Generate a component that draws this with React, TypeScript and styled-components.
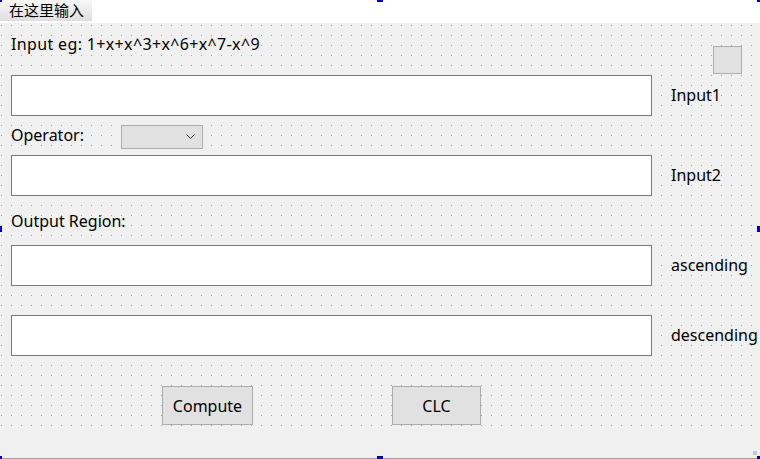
import React from 'react';
import styled, { createGlobalStyle } from 'styled-components';

const GlobalStyle = createGlobalStyle`
   html, body {
      margin: 0;
      padding: 0;
      background: #ffffff;
   }
   body {
      font-family: 'Noto Sans', 'Noto Sans CJK SC', sans-serif;
      font-size: 16px;
      color: #000000;
   }
`;

const Form = styled.div`
   position: relative;
   width: 760px;
   height: 459px;
   overflow: hidden;
   display: flex;
   flex-direction: column;
   background: #f0f0f0;
`;

const MenuBar = styled.div`
   height: 23px;
   background: #ffffff;
   display: flex;
   align-items: flex-start;
`;

const MenuItem = styled.div`
   height: 21px;
   width: 92px;
   padding-left: 9px;
   box-sizing: border-box;
   background: linear-gradient(#f8f8f8, #dedede);
   font-family: 'Noto Sans CJK SC', sans-serif;
   font-size: 15px;
   line-height: 20px;
   color: #000;
`;

const Canvas = styled.div`
   height: 410px;
   display: flex;
   flex-direction: column;
   background-color: #f0f0f0;
   background-image: conic-gradient(at 1px 1px, transparent 75%, #a0a0a0 0);
   background-size: 10px 10px;
   background-position: 1px 2px;
`;

const StatusBar = styled.div`
   flex: 1;
   position: relative;
   border-bottom: 1px solid #a0a0a0;
`;

const Grip = styled.div`
   position: absolute;
   right: 3px;
   bottom: 3px;
   width: 4px;
   height: 4px;
   background: #c8c8c8;
`;

const HintRow = styled.div`
   height: 52px;
   display: flex;
   align-items: flex-start;
   padding-left: 11px;
`;

const Text = styled.span`
   line-height: 20px;
   white-space: nowrap;
`;

const Hint = styled(Text)`
   margin-top: 11px;
   letter-spacing: 0.35px;
`;

const SideLabel = styled(Text)`
   margin-top: -1px;
`;

const SquareButton = styled.div`
   margin-top: 23px;
   margin-left: auto;
   margin-right: 18px;
   width: 29px;
   height: 28px;
   box-sizing: border-box;
   background: #e1e1e1;
   border: 1px solid #adadad;
`;

const FieldRow = styled.div<{ $top: number }>`
   display: flex;
   align-items: center;
   margin-top: ${({ $top }) => $top}px;
   padding-left: 11px;
   gap: 19px;
`;

const Field = styled.div`
   width: 641px;
   height: 41px;
   flex-shrink: 0;
   box-sizing: border-box;
   background: #ffffff;
   border: 1px solid #7a7a7a;
`;

const LabelRow = styled.div<{ $top: number }>`
   display: flex;
   align-items: center;
   margin-top: ${({ $top }) => $top}px;
   padding-left: 11px;
`;

const OperatorLabel = styled(Text)`
   width: 110px;
   margin-top: -4px;
`;

const Combo = styled.div`
   width: 82px;
   height: 24px;
   box-sizing: border-box;
   background: #e1e1e1;
   border: 1px solid #adadad;
   display: flex;
   align-items: center;
   justify-content: flex-end;
   padding-right: 7px;
`;

const ButtonRow = styled.div`
   display: flex;
   margin-top: 30px;
   padding-left: 162px;
   gap: 139px;
`;

const PushButton = styled.div<{ $w: number }>`
   width: ${({ $w }) => $w}px;
   height: 39px;
   box-sizing: border-box;
   background: #e1e1e1;
   border: 1px solid #adadad;
   display: flex;
   align-items: center;
   justify-content: center;
`;

const Handle = styled.div<{ $x: number; $y: number }>`
   position: absolute;
   left: ${({ $x }) => $x}px;
   top: ${({ $y }) => $y}px;
   width: 6px;
   height: 6px;
   box-sizing: border-box;
   background: #0000ff;
   border: 1px solid #000080;
`;

const handles: [number, number][] = [
   [-4, -4], [377, -4], [757, -4],
   [-4, 226], [757, 226],
   [-4, 456], [377, 456], [757, 456],
];

const App: React.FC = () => {
   return (
      <>
         <GlobalStyle />
         <Form>
            <MenuBar>
               <MenuItem>在这里输入</MenuItem>
            </MenuBar>
            <Canvas>
               <HintRow>
                  <Hint>Input eg: 1+x+x^3+x^6+x^7-x^9</Hint>
                  <SquareButton />
               </HintRow>
               <FieldRow $top={0}>
                  <Field />
                  <SideLabel>Input1</SideLabel>
               </FieldRow>
               <LabelRow $top={9}>
                  <OperatorLabel>Operator:</OperatorLabel>
                  <Combo>
                     <svg width='9' height='6' viewBox='0 0 9 6'>
                        <path d='M0.5 0.5 L4.5 4.5 L8.5 0.5' fill='none' stroke='#333' strokeWidth='1' />
                     </svg>
                  </Combo>
               </LabelRow>
               <FieldRow $top={6}>
                  <Field />
                  <SideLabel>Input2</SideLabel>
               </FieldRow>
               <LabelRow $top={15}>
                  <Text>Output Region:</Text>
               </LabelRow>
               <FieldRow $top={14}>
                  <Field />
                  <SideLabel>ascending</SideLabel>
               </FieldRow>
               <FieldRow $top={29}>
                  <Field />
                  <SideLabel>descending</SideLabel>
               </FieldRow>
               <ButtonRow>
                  <PushButton $w={91}>Compute</PushButton>
                  <PushButton $w={89}>CLC</PushButton>
               </ButtonRow>
            </Canvas>
            <StatusBar>
               <Grip />
            </StatusBar>
            {handles.map(([x, y]) => (
               <Handle key={`${x}-${y}`} $x={x} $y={y} />
            ))}
         </Form>
      </>
   );
};

export default App;
